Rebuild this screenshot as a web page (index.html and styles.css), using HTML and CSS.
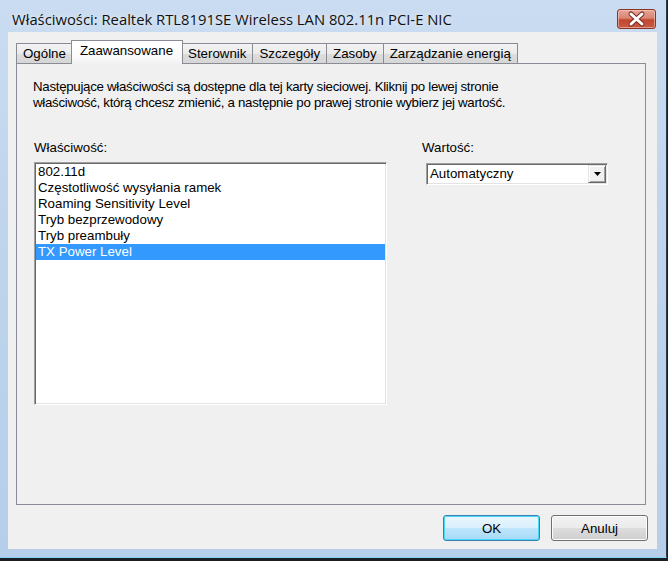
FILE: index.html
```html
<!DOCTYPE html>
<html lang="pl">
<head>
  <meta charset="UTF-8" />
  <title>Właściwości: Realtek RTL8191SE Wireless LAN 802.11n PCI-E NIC</title>
  <link rel="stylesheet" href="styles.css">
</head>
<body>
  <div class="window">
    <!-- Title bar -->
    <div class="titlebar">
      <span class="title">Właściwości: Realtek RTL8191SE Wireless LAN 802.11n PCI-E NIC</span>
      <div class="close">
        <svg viewBox="0 0 39 20" width="39" height="20">
          <path class="x-shadow" d="M14 5 L25 15 M25 5 L14 15" />
          <path class="x-mark" d="M14 5 L25 15 M25 5 L14 15" />
        </svg>
      </div>
    </div>

    <div class="client">
      <!-- Tabs -->
      <div class="tabs">
        <div class="tab">Ogólne</div>
        <div class="tab active">Zaawansowane</div>
        <div class="tab">Sterownik</div>
        <div class="tab">Szczegóły</div>
        <div class="tab">Zasoby</div>
        <div class="tab">Zarządzanie energią</div>
      </div>

      <div class="panel">
        <p class="intro">Następujące właściwości są dostępne dla tej karty sieciowej. Kliknij po lewej stronie<br>właściwość, którą chcesz zmienić, a następnie po prawej stronie wybierz jej wartość.</p>

        <div class="fields">
          <div class="field-list">
            <div class="label">Właściwość:</div>
            <ul class="listbox">
              <li>802.11d</li>
              <li>Częstotliwość wysyłania ramek</li>
              <li>Roaming Sensitivity Level</li>
              <li>Tryb bezprzewodowy</li>
              <li>Tryb preambuły</li>
              <li class="selected">TX Power Level</li>
            </ul>
          </div>
          <div class="field-value">
            <div class="label">Wartość:</div>
            <div class="combo">
              <span class="combo-text">Automatyczny</span>
              <span class="combo-btn">
                <svg viewBox="0 0 7 4" width="7" height="4"><path d="M0 0 H7 L3.5 4 Z" /></svg>
              </span>
            </div>
          </div>
        </div>
      </div>

      <!-- Dialog buttons -->
      <div class="buttons">
        <button class="btn default">OK</button>
        <button class="btn">Anuluj</button>
      </div>
    </div>
  </div>
</body>
</html>
```

FILE: styles.css
```css
body {
  margin: 0;
  background-color: #1c1f24;
  font-family: "Liberation Sans", Arial, sans-serif;
  font-size: 13.3px;
  color: #000;
}

.window {
  width: 649px;
  height: 557px;
  padding: 0 9px 0 8px;
  border-right: 1px solid #2e3a48;
  border-bottom: 1px solid #7fd6f0;
  background: linear-gradient(180deg, #cadcf1 0%, #bfd5ed 40%, #b6cee9 100%);
  display: flex;
  flex-direction: column;
}

.titlebar {
  height: 32px;
  display: flex;
  justify-content: space-between;
  align-items: flex-start;
  padding-top: 9px;
  box-sizing: border-box;
}

.title {
  font-family: "Open Sans", "Noto Sans", sans-serif;
  font-size: 14.8px;
  line-height: 20px;
  padding-left: 4px;
  color: #111;
  text-shadow: 0 0 6px rgba(255,255,255,0.8);
}

.close {
  width: 37px;
  height: 18px;
  margin-right: 1px;
  border: 1px solid #8a3327;
  border-radius: 3px;
  background: linear-gradient(180deg, #e6a598 0%, #d98673 45%, #c4462f 55%, #c85a42 100%);
  box-shadow: inset 0 0 0 1px rgba(255,220,210,0.5);
  overflow: hidden;
}

.close svg {
  display: block;
  margin: -1px 0 0 -1px;
}

.x-shadow {
  stroke: #7a2a20;
  stroke-width: 5;
  stroke-linecap: round;
  fill: none;
}

.x-mark {
  stroke: #fff;
  stroke-width: 3;
  stroke-linecap: round;
  fill: none;
}

.client {
  height: 517px;
  background-color: #f0f0f0;
  padding: 9px 11px 8px 8px;
  box-sizing: border-box;
  display: flex;
  flex-direction: column;
}

/* tabs */

.tabs {
  height: 22px;
  display: flex;
  align-items: flex-end;
  position: relative;
  z-index: 1;
}

.tab {
  height: 19px;
  line-height: 19px;
  padding: 0 6px;
  border: 1px solid #898c95;
  border-bottom: none;
  margin-left: -1px;
  background: linear-gradient(180deg, #f3f3f3 0%, #ebebeb 50%, #dddddd 51%, #d6d6d6 100%);
  white-space: nowrap;
}

.tab:first-child {
  margin-left: 0;
}

.tab.active {
  height: 23px;
  line-height: 20px;
  margin-bottom: -1px;
  padding: 0 9px 0 8px;
  margin-left: -2px;
  margin-right: -1px;
  background: linear-gradient(180deg, #fff 0%, #fafafa 70%, #f0f0f0 100%);
  position: relative;
  z-index: 2;
}

.panel {
  height: 442px;
  border: 1px solid #898c95;
  background-color: #f0f0f0;
  padding: 15px 16px;
  box-sizing: border-box;
}

.intro {
  margin: 0;
  line-height: 16px;
  letter-spacing: -0.3px;
}

.fields {
  display: flex;
  margin-top: 29px;
}

.label {
  line-height: 16px;
}

.field-list {
  width: 353px;
  margin-left: 1px;
}

.field-list .label {
  margin-bottom: 6px;
}

.listbox {
  list-style: none;
  margin: 0;
  padding: 1px;
  height: 243px;
  box-sizing: border-box;
  background-color: #fff;
  border: 1px solid;
  border-color: #a0a0a0 #fff #fff #a0a0a0;
  box-shadow: inset 1px 1px 0 #696969, inset -1px -1px 0 #e3e3e3;
}

.listbox li {
  line-height: 16px;
  padding-left: 2px;
  white-space: nowrap;
}

.listbox li.selected {
  background-color: #3399ff;
  color: #fff;
}

.field-value {
  margin-left: 35px;
}

.field-value .label {
  margin-bottom: 7px;
}

.combo {
  width: 182px;
  height: 22px;
  margin-left: 4px;
  box-sizing: border-box;
  padding: 1px;
  background-color: #fff;
  border: 1px solid;
  border-color: #a0a0a0 #fff #fff #a0a0a0;
  box-shadow: inset 1px 1px 0 #696969, inset -1px -1px 0 #e3e3e3;
  display: flex;
  justify-content: space-between;
}

.combo-text {
  line-height: 18px;
  padding-left: 2px;
}

.combo-btn {
  width: 18px;
  height: 18px;
  box-sizing: border-box;
  background-color: #f0f0f0;
  border: 1px solid;
  border-color: #e3e3e3 #696969 #696969 #e3e3e3;
  box-shadow: inset 1px 1px 0 #fff, inset -1px -1px 0 #a0a0a0;
  display: flex;
  align-items: center;
  justify-content: center;
}

.combo-btn svg {
  display: block;
  fill: #000;
}

/* dialog buttons */

.buttons {
  display: flex;
  justify-content: flex-end;
  gap: 11px;
  margin-top: 10px;
  margin-right: -2px;
}

.btn {
  width: 97px;
  height: 26px;
  font-family: "Liberation Sans", Arial, sans-serif;
  font-size: 13.3px;
  color: #000;
  border: 1px solid #707070;
  border-radius: 3px;
  background: linear-gradient(180deg, #f2f2f2 0%, #ebebeb 50%, #dddddd 51%, #cfcfcf 100%);
  box-shadow: inset 0 0 0 1px #fcfcfc;
  padding: 0;
}

.btn.default {
  border-color: #3c7fb1;
  background: linear-gradient(180deg, #eaf6fd 0%, #d9f0fc 50%, #bee6fd 51%, #a7d9f5 100%);
  box-shadow: inset 0 0 0 1px #48d8f8;
}
```
